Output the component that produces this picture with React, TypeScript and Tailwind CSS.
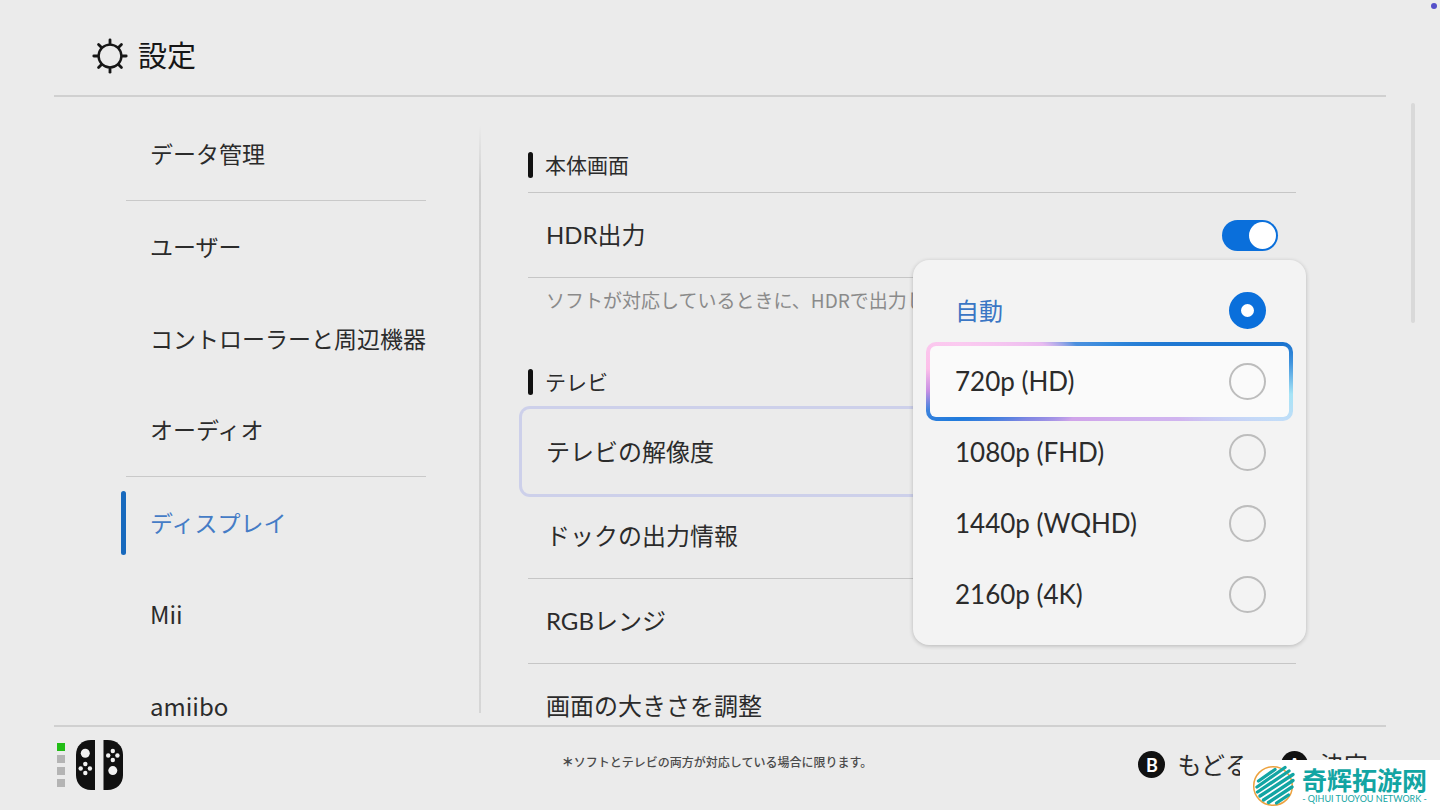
import { useState } from "react";
import clsx from "clsx";

const menu = [
  { id: "data", label: "データ管理", divider: true },
  { id: "user", label: "ユーザー" },
  { id: "controller", label: "コントローラーと周辺機器" },
  { id: "audio", label: "オーディオ", divider: true },
  { id: "display", label: "ディスプレイ" },
  { id: "mii", label: "Mii", latin: true },
  { id: "amiibo", label: "amiibo", latin: true },
];

const resolutions = [
  { value: "auto", label: "自動" },
  { value: "720", label: "720p (HD)" },
  { value: "1080", label: "1080p (FHD)" },
  { value: "1440", label: "1440p (WQHD)" },
  { value: "2160", label: "2160p (4K)" },
];

function SunIcon() {
  return (
    <svg
      viewBox="0 0 36 36"
      className="w-9 h-9"
      fill="none"
      stroke="currentColor"
      strokeWidth="2.8"
      strokeLinecap="round"
    >
      <circle cx="18" cy="18" r="11.4" strokeWidth="2.4" />
      {[0, 45, 90, 135, 180, 225, 270, 315].map((deg) => (
        <path key={deg} d="M18 6V1.8" transform={`rotate(${deg} 18 18)`} />
      ))}
    </svg>
  );
}

function JoyConIcon() {
  return (
    <svg viewBox="0 0 47 50" className="w-[47px] h-[50px]">
      <path d="M19 0v50h-4C6 50 0 43.500 0 35V15C0 6 6 0 15 0z" fill="#111" />
      <path d="M27.500 0v50h4C41 50 47 43.500 47 35V15C47 6 41 0 31.500 0z" fill="#111" />
      <g fill="#f2f2f2">
        <circle cx="9.300" cy="13.300" r="4.500" />
        <circle cx="9.300" cy="24" r="2.200" />
        <circle cx="4.700" cy="28.500" r="2.200" />
        <circle cx="13.900" cy="28.500" r="2.200" />
        <circle cx="9.300" cy="33" r="2.200" />
        <circle cx="36.800" cy="11" r="2.200" />
        <circle cx="32.200" cy="15.500" r="2.200" />
        <circle cx="41.400" cy="15.500" r="2.200" />
        <circle cx="36.800" cy="20" r="2.200" />
        <circle cx="36.800" cy="30.600" r="4.500" />
      </g>
    </svg>
  );
}

function StripedGlobe() {
  return (
    <svg viewBox="0 0 44 44" className="w-11 h-11" fill="none">
      <circle cx="21" cy="23" r="19.300" stroke="#eda23f" strokeWidth="1.500" />
      <g stroke="#12a5a3" strokeWidth="3.300" strokeLinecap="round">
        <path d="M6.500 18L23 6.500" />
        <path d="M5 24L33 4.500" />
        <path d="M5.500 29L37 8" />
        <path d="M8 33L41 11.500" />
        <path d="M11.500 37L41 17.500" />
        <path d="M16.500 39.500L40 24" />
        <path d="M24.500 40L36.500 32" />
      </g>
    </svg>
  );
}

function SectionTitle({ children }: { children: string }) {
  return (
    <h2 className="flex items-center gap-3 pt-[55px] pb-3.5 text-[21px] leading-6">
      <span className="w-[5px] h-[26px] rounded-sm bg-[#111]" />
      {children}
    </h2>
  );
}

function ResolutionMenu() {
  const [value, setValue] = useState("auto");
  const focused = "720";

  return (
    <div
      role="radiogroup"
      aria-label="テレビの解像度"
      className="absolute -top-[149px] -right-1 z-10 w-[393px] px-[17px] py-[15px] rounded-2xl bg-[#f3f3f3] shadow-[0_1px_4px_rgba(0,0,0,0.22)]"
    >
      {resolutions.map((r) => (
        <label
          key={r.value}
          className={clsx(
            "flex items-center justify-between h-[71px] pl-[25px] pr-[23px]",
            r.value === "auto" ? "text-[24px]" : "text-[26px]",
            value === r.value && "text-[#3a76c4]",
            r.value === focused &&
              "box-content -m-1 border-4 border-transparent rounded-[10px] [background:linear-gradient(#fafafa,#fafafa)_padding-box,conic-gradient(#3289dc_0deg,#1a73cf_78deg,#3f93dd_84deg,#a6e4f6_94deg,#c3dcf8_103deg,#d0b4ef_118deg,#d0a4ea_225deg,#7f86e2_246deg,#1f7bdc_256deg,#3f83dd_261deg,#c78fe4_267deg,#fdbfe9_274deg,#fbcaf0_284deg,#e9bbf0_299deg,#4b90de_318deg,#3289dc_360deg)_border-box]"
          )}
        >
          {r.label}
          <input
            type="radio"
            name="resolution"
            value={r.value}
            checked={value === r.value}
            onChange={() => setValue(r.value)}
            className="appearance-none w-[37px] h-[37px] rounded-full border-2 border-[#bdbdbd] checked:border-[12px] checked:border-[#0a6fdb] checked:bg-white"
          />
        </label>
      ))}
    </div>
  );
}

function SettingRow({ label }: { label: string }) {
  return (
    <button className="flex items-center w-full h-[85px] px-[18px] border-b border-[#c6c6c6] text-2xl text-left">
      {label}
    </button>
  );
}

export default function App() {
  const [current, setCurrent] = useState("display");
  const [hdr, setHdr] = useState(true);

  return (
    <div className="relative flex flex-col h-screen overflow-hidden bg-[#ebebeb] text-[#2b2b2b] font-[Lato,'Noto_Sans_CJK_JP',sans-serif]">
      <span className="absolute top-[3px] right-[3px] w-1.5 h-1.5 rounded-full bg-[#544fc9]" />

      <header className="flex items-center gap-2.5 shrink-0 h-[97px] mx-[54px] pl-[38px] pt-4 border-b-2 border-[#d0d0d0] text-[#161616]">
        <SunIcon />
        <h1 className="text-[29px] leading-9">設定</h1>
      </header>

      <div className="flex flex-1 min-h-0">
        <nav className="shrink-0 w-[479px] pl-[121px] pr-[53px] pt-3 overflow-hidden font-['Noto_Sans_CJK_JP',sans-serif]">
          {menu.map((m) => (
            <a
              key={m.id}
              href={`#${m.id}`}
              onClick={() => setCurrent(m.id)}
              className={clsx(
                "flex items-center h-[92px]",
                m.latin ? "text-[24px]" : "text-[23px]",
                current === m.id && "text-[#457cc6]"
              )}
            >
              <span
                className={clsx(
                  "shrink-0 w-[5px] h-16 rounded-sm",
                  current === m.id && "bg-[#1769bd]"
                )}
              />
              <span
                className={clsx(
                  "flex items-center grow h-full pl-6 pb-0.5 whitespace-nowrap",
                  m.divider && "border-b border-[#c9c9c9]"
                )}
              >
                {m.label}
              </span>
            </a>
          ))}
        </nav>

        <div className="shrink-0 w-0.5 mt-7 mb-3 bg-linear-to-b from-transparent via-[#cfcfcf] via-10% to-[#d6d6d6]" />

        <main className="flex-1 min-w-0 pl-[47px] pr-[115px] overflow-hidden">
          <SectionTitle>本体画面</SectionTitle>
          <label className="flex items-center justify-between h-[86px] px-[18px] border-y border-[#c6c6c6] text-2xl">
            HDR出力
            <input
              type="checkbox"
              role="switch"
              checked={hdr}
              onChange={(e) => setHdr(e.target.checked)}
              className="appearance-none flex items-center w-14 h-[31px] p-0.5 rounded-full bg-[#aaa] checked:bg-[#0a6fdb] checked:justify-end before:w-[27px] before:h-[27px] before:rounded-full before:bg-white"
            />
          </label>
          <p className="pt-2 px-[18px] text-[19px] leading-7 text-[#8a8a8a] whitespace-nowrap font-['Noto_Sans_CJK_JP',sans-serif]">
            ソフトが対応しているときに、HDRで出力します。
          </p>

          <SectionTitle>テレビ</SectionTitle>
          <div className="relative -mx-1.5 rounded-lg ring-3 ring-[#cdd0ea]">
            <button className="flex items-center w-full h-[85px] px-6 text-2xl text-left">
              テレビの解像度
            </button>
            <ResolutionMenu />
          </div>
          <SettingRow label="ドックの出力情報" />
          <SettingRow label="RGBレンジ" />
          <SettingRow label="画面の大きさを調整" />
        </main>

        <div className="shrink-0 w-1 h-[220px] mt-1.5 mr-[25px] rounded-full bg-[#d9d9d9]" />
      </div>

      <footer className="grid grid-cols-[1fr_auto_1fr] items-center shrink-0 h-[85px] mx-[54px] pb-2 border-t-2 border-[#d0d0d0]">
        <div className="flex items-center gap-[11px] pl-[3px]">
          <div className="flex flex-col gap-1">
            <span className="w-2 h-2 bg-[#22bd16]" />
            <span className="w-2 h-2 bg-[#b4b4b4]" />
            <span className="w-2 h-2 bg-[#b4b4b4]" />
            <span className="w-2 h-2 bg-[#b4b4b4]" />
          </div>
          <JoyConIcon />
        </div>
        <p className="pr-1.5 pb-1 text-xs font-medium text-[#4a4a4a]">
          <span className="font-black">＊</span>
          ソフトとテレビの両方が対応している場合に限ります。
        </p>
        <div className="flex items-center justify-end gap-8 pr-[18px] text-2xl leading-7">
          <button className="flex items-center gap-3">
            <span className="flex items-center justify-center w-[27px] h-[27px] rounded-full bg-[#111] text-lg font-bold text-white">
              B
            </span>
            もどる
          </button>
          <button className="flex items-center gap-3">
            <span className="flex items-center justify-center w-[27px] h-[27px] rounded-full bg-[#111] text-lg font-bold text-white">
              A
            </span>
            決定
          </button>
        </div>
      </footer>

      <div className="absolute right-0 bottom-0 flex items-center gap-1.5 w-[200px] h-[50px] pl-3 bg-white text-[#12a5a3]">
        <StripedGlobe />
        <div className="flex flex-col items-center whitespace-nowrap">
          <span className="text-[25px] leading-8 font-bold font-['Noto_Sans_CJK_SC',sans-serif]">
            奇辉拓游网
          </span>
          <span className="pb-1 text-[9px] leading-2">
            - QIHUI TUOYOU NETWORK -
          </span>
        </div>
      </div>
    </div>
  );
}
